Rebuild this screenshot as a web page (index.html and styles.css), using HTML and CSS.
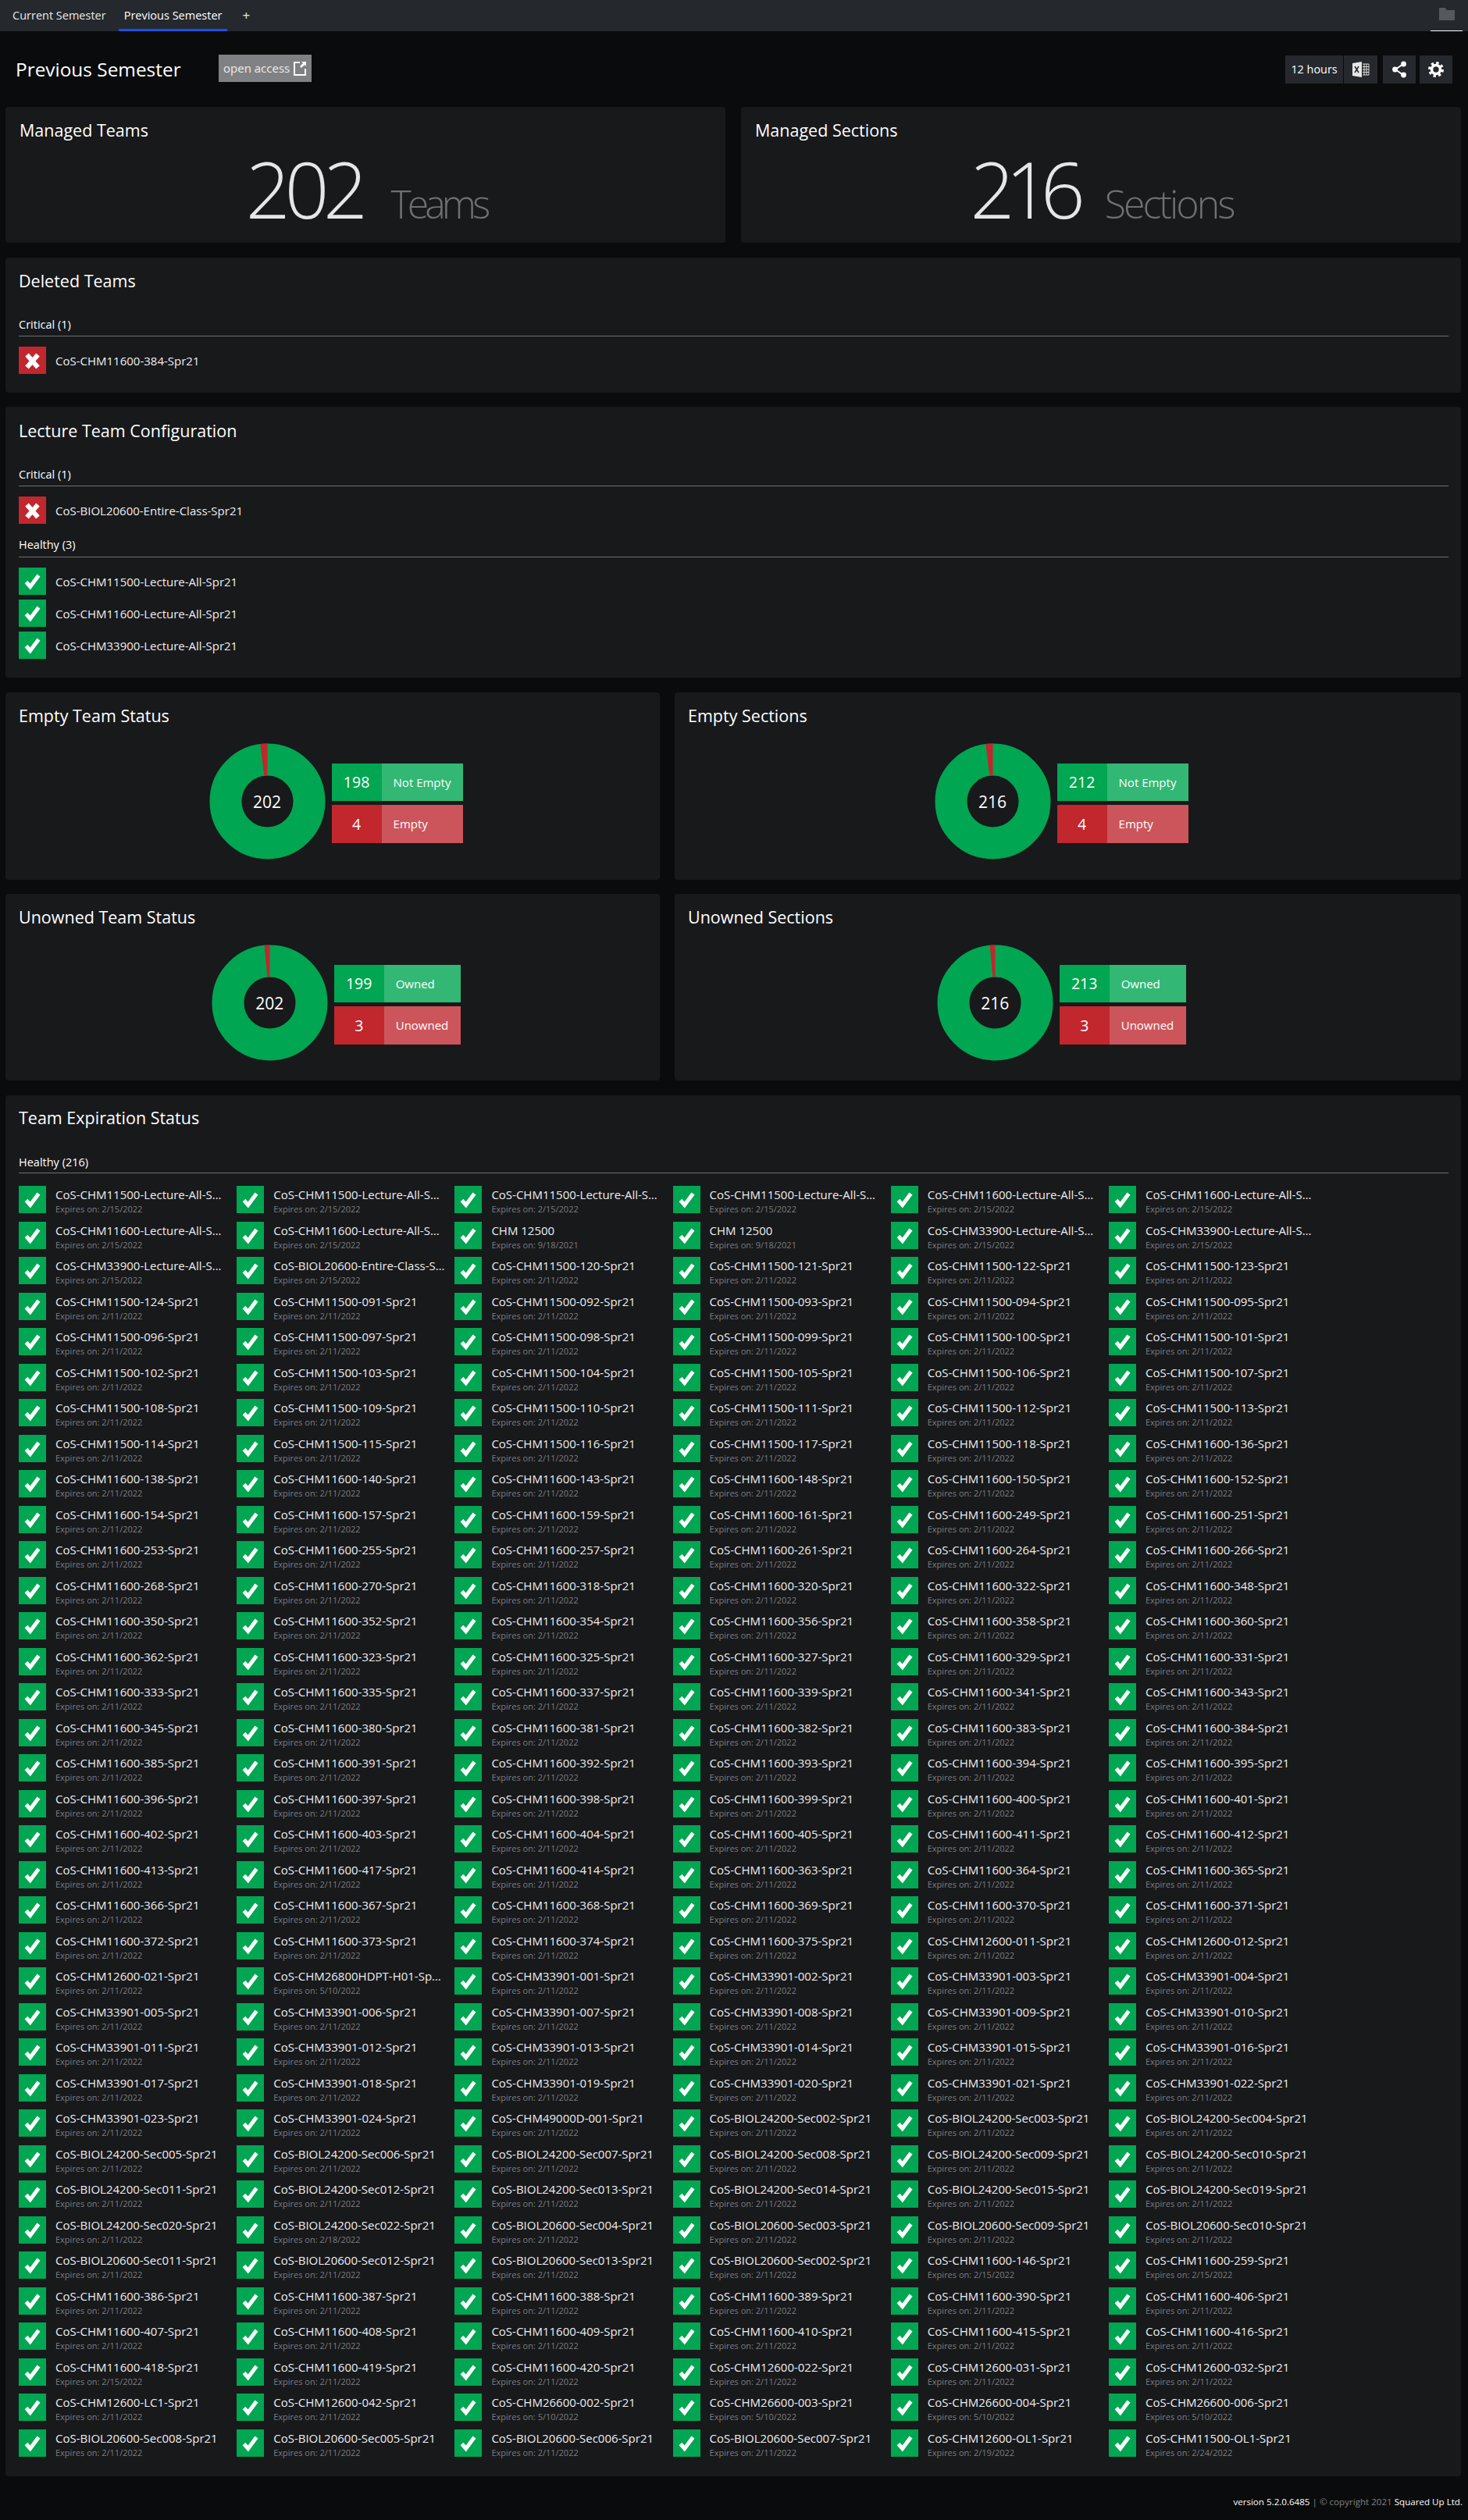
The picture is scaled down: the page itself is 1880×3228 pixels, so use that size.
FILE: index.html
```html
<!DOCTYPE html>
<html lang="en">
<head>
    <title>Previous Semester</title>
    <meta name="viewport" content="width=device-width, initial-scale=1.0">
    <link rel="stylesheet" href="styles.css">
</head>
<body>
    <svg class="sprite" xmlns="http://www.w3.org/2000/svg">
        <symbol id="ok" viewBox="0 0 35 35"><path d="M9.5 18.5 L14.7 24.5 L25.5 10" fill="none" stroke="#fff" stroke-width="5"/></symbol>
        <symbol id="bad" viewBox="0 0 35 35"><path d="M10.5 10.5 L24.5 26.5 M24.5 10.5 L10.5 26.5" fill="none" stroke="#fff" stroke-width="6"/></symbol>
    </svg>

    <nav class="tabs">
        <a class="tab">Current Semester</a>
        <a class="tab active">Previous Semester</a>
        <a class="tab tab-add">+</a>
        <a class="tab-folder">
            <svg width="20" height="16" viewBox="0 0 20 16"><path d="M0 0 H8 L10 3 H20 V16 H0 Z" fill="#55585c"/></svg>
        </a>
    </nav>

    <header class="page-head">
        <h1>Previous Semester</h1>
        <button class="open-access">open access
            <svg width="16" height="19" viewBox="0 0 16 19"><path d="M8 2 H1 V18 H15 V10" fill="none" stroke="#fff" stroke-width="2"/><path d="M10 1 H16 V7 L14 5 L10 9 L8 7 L12 3 Z" fill="#fff"/></svg>
        </button>
        <div class="controls">
            <span class="ctl ctl-time">12 hours</span>
            <span class="ctl ctl-xls">
                <svg width="22" height="20" viewBox="0 0 22 20"><path d="M0 2 L12 0 V20 L0 18 Z" fill="#e6e6e6"/><path d="M3 6 L8 14 M8 6 L3 14" stroke="#25282d" stroke-width="1.5"/><path d="M13 3 H21 V17 H13 M15 3 V17 M18 3 V17 M13 6.5 H21 M13 10 H21 M13 13.5 H21" fill="none" stroke="#d8d8d8" stroke-width="1"/></svg>
            </span>
            <span class="ctl">
                <svg width="20" height="22" viewBox="0 0 20 22"><path d="M15 4 L5 11 L15 18" fill="none" stroke="#fff" stroke-width="2"/><circle cx="15.5" cy="4" r="3.4" fill="#fff"/><circle cx="4.5" cy="11" r="3.4" fill="#fff"/><circle cx="15.5" cy="18" r="3.4" fill="#fff"/></svg>
            </span>
            <span class="ctl">
                <svg width="20" height="20" viewBox="0 0 20 20"><circle cx="10" cy="10" r="5.5" fill="none" stroke="#fff" stroke-width="3.6"/><circle cx="10" cy="10" r="8.3" fill="none" stroke="#fff" stroke-width="3.4" stroke-dasharray="3.3 3.22"/></svg>
            </span>
        </div>
    </header>

    <main class="page">
        <div class="row row-stats">
            <section class="card stat-card">
                <h2>Managed Teams</h2>
                <div class="stat"><span class="stat-num">202</span><span class="stat-unit unit-teams">Teams</span></div>
            </section>
            <section class="card stat-card">
                <h2>Managed Sections</h2>
                <div class="stat"><span class="stat-num num-narrow">216</span><span class="stat-unit">Sections</span></div>
            </section>
        </div>

        <section class="card deleted">
            <h2>Deleted Teams</h2>
            <h3>Critical (1)</h3>
            <div class="simple-item"><svg class="ico ico-bad"><use href="#bad"/></svg>CoS-CHM11600-384-Spr21</div>
        </section>

        <section class="card lecture">
            <h2>Lecture Team Configuration</h2>
            <h3>Critical (1)</h3>
            <div class="simple-item"><svg class="ico ico-bad"><use href="#bad"/></svg>CoS-BIOL20600-Entire-Class-Spr21</div>
            <h3 class="h3-next">Healthy (3)</h3>
            <div class="simple-item"><svg class="ico ico-ok"><use href="#ok"/></svg>CoS-CHM11500-Lecture-All-Spr21</div>
            <div class="simple-item"><svg class="ico ico-ok"><use href="#ok"/></svg>CoS-CHM11600-Lecture-All-Spr21</div>
            <div class="simple-item"><svg class="ico ico-ok"><use href="#ok"/></svg>CoS-CHM33900-Lecture-All-Spr21</div>
        </section>

        <div class="row row-donuts row-empty">
            <section class="card donut-card left">
                <h2>Empty Team Status</h2>
                <div class="donut-row">
                    <div class="donut">
                        <svg width="149" height="149" viewBox="0 0 149 149"><circle cx="74.5" cy="74.5" r="53.5" fill="none" stroke="#00a651" stroke-width="41"/><path d="M74.5 .5 A74 74 0 0 0 65.3 1.07 L70.4 41.75 A33 33 0 0 1 74.5 41.5 Z" fill="#c1272d"/></svg>
                        <span>202</span>
                    </div>
                    <div class="legend">
                        <span class="num ok">198</span><span class="lab ok">Not Empty</span>
                        <span class="num bad">4</span><span class="lab bad">Empty</span>
                    </div>
                </div>
            </section>
            <section class="card donut-card right">
                <h2>Empty Sections</h2>
                <div class="donut-row">
                    <div class="donut">
                        <svg width="149" height="149" viewBox="0 0 149 149"><circle cx="74.5" cy="74.5" r="53.5" fill="none" stroke="#00a651" stroke-width="41"/><path d="M74.5 .5 A74 74 0 0 0 65.3 1.07 L70.4 41.75 A33 33 0 0 1 74.5 41.5 Z" fill="#c1272d"/></svg>
                        <span>216</span>
                    </div>
                    <div class="legend">
                        <span class="num ok">212</span><span class="lab ok">Not Empty</span>
                        <span class="num bad">4</span><span class="lab bad">Empty</span>
                    </div>
                </div>
            </section>
        </div>

        <div class="row row-donuts row-unowned">
            <section class="card donut-card left">
                <h2>Unowned Team Status</h2>
                <div class="donut-row">
                    <div class="donut">
                        <svg width="149" height="149" viewBox="0 0 149 149"><circle cx="74.5" cy="74.5" r="53.5" fill="none" stroke="#00a651" stroke-width="41"/><path d="M74.5 .5 A74 74 0 0 0 67.6 .83 L71.4 41.65 A33 33 0 0 1 74.5 41.5 Z" fill="#c1272d"/></svg>
                        <span>202</span>
                    </div>
                    <div class="legend">
                        <span class="num ok">199</span><span class="lab ok">Owned</span>
                        <span class="num bad">3</span><span class="lab bad">Unowned</span>
                    </div>
                </div>
            </section>
            <section class="card donut-card right">
                <h2>Unowned Sections</h2>
                <div class="donut-row">
                    <div class="donut">
                        <svg width="149" height="149" viewBox="0 0 149 149"><circle cx="74.5" cy="74.5" r="53.5" fill="none" stroke="#00a651" stroke-width="41"/><path d="M74.5 .5 A74 74 0 0 0 67.6 .83 L71.4 41.65 A33 33 0 0 1 74.5 41.5 Z" fill="#c1272d"/></svg>
                        <span>216</span>
                    </div>
                    <div class="legend">
                        <span class="num ok">213</span><span class="lab ok">Owned</span>
                        <span class="num bad">3</span><span class="lab bad">Unowned</span>
                    </div>
                </div>
            </section>
        </div>

        <section class="card expiry">
            <h2>Team Expiration Status</h2>
            <h3>Healthy (216)</h3>
            <div class="expiry-list" id="expiry-list"></div>
        </section>
    </main>

    <footer class="foot">
        <span>version 5.2.0.6485</span> <span class="dim">| © copyright 2021</span> <span>Squared Up Ltd.</span>
    </footer>

    <script src="script.js"></script>
</body>
</html>
```

FILE: styles.css
```css
* {
    box-sizing: border-box;
}
body {
    margin: 0;
    background: #0a0b0c;
    color: #fff;
    font-family: "Open Sans", "Noto Sans", Arial, sans-serif;
    font-size: 15px;
}
.sprite {
    display: none;
}
h1, h2, h3 {
    margin: 0;
    font-weight: 400;
}

/* tabs */
.tabs {
    display: flex;
    height: 40px;
    padding-left: 9px;
    gap: 9px;
    background: #25282d;
}
.tab {
    padding: 0 7px;
    line-height: 40px;
    font-size: 14.5px;
    color: #e8e8e8;
}
.tab.active {
    color: #fff;
    border-bottom: 3px solid #1652e8;
}
.tab-add {
    margin-left: 10px;
    padding: 0;
    font-size: 17px;
}
.tab-folder {
    display: flex;
    justify-content: center;
    width: 41px;
    margin-left: auto;
    margin-right: 7px;
    padding-top: 10px;
    border-bottom: 1px solid #fff;
}

/* page header */
.page-head {
    display: flex;
    align-items: center;
    height: 97px;
    padding: 0 20px;
}
.page-head h1 {
    margin-right: 48px;
    font-size: 24.4px;
}
.open-access {
    display: flex;
    align-items: center;
    justify-content: center;
    gap: 5px;
    width: 119px;
    height: 35px;
    margin-bottom: 3px;
    padding: 0;
    border: 0;
    background: #808184;
    color: #eee;
    font-family: inherit;
    font-size: 15px;
}
.controls {
    display: flex;
    margin-left: auto;
}
.ctl {
    display: flex;
    align-items: center;
    justify-content: center;
    width: 42px;
    height: 36px;
    margin-left: 5px;
    background: #25282d;
    font-size: 14.4px;
}
.ctl-time {
    width: 74px;
}
.ctl-xls {
    width: 43px;
    margin-left: 1px;
    margin-right: 2px;
}

/* cards */
.page {
    width: 1864px;
    margin-left: 7px;
}
.row {
    display: grid;
}
.row-stats {
    grid-template-columns: 922px 922px;
    gap: 20px;
}
.row-donuts {
    grid-template-columns: 838px 1007px;
    gap: 19px;
}
.card {
    padding: 16px 16px 0 17px;
    background: #18191b;
    border-radius: 4px;
}
.card h2 {
    font-size: 21.5px;
    line-height: 28px;
}
.card h3 {
    padding-bottom: 4px;
    margin-top: 32px;
    border-bottom: 1px solid #6f7072;
    font-size: 14.5px;
    line-height: 20px;
}
.card h3.h3-next {
    margin-top: 17px;
    padding-bottom: 5px;
}

/* big numbers */
.stat-card {
    height: 174px;
    padding-left: 18px;
}
.stat {
    display: flex;
    align-items: baseline;
    justify-content: center;
    gap: 37px;
    height: 100px;
    margin-top: 10px;
    line-height: 100px;
}
.stat-num {
    font-size: 100px;
    font-weight: 300;
    letter-spacing: -7.5px;
    color: #e6e6e8;
}
.num-narrow {
    letter-spacing: -12px;
}
.stat-unit {
    font-size: 50px;
    font-weight: 300;
    letter-spacing: -3px;
    color: #6f7072;
}
.unit-teams {
    letter-spacing: -5px;
}

/* status lists */
.deleted {
    height: 173px;
    margin-top: 19px;
}
.lecture {
    height: 347px;
    margin-top: 18px;
}
.lecture h2 {
    padding-top: 1px;
}
.simple-item {
    display: flex;
    align-items: center;
    gap: 12px;
    height: 35px;
    margin-top: 13px;
    color: #eee;
}
.simple-item + .simple-item {
    margin-top: 6px;
}
.ico {
    flex: none;
    width: 35px;
    height: 35px;
}
.ico-ok {
    background: #00a651;
}
.ico-bad {
    background: #c1272d;
}

/* donuts */
.row-empty {
    margin-top: 19px;
}
.row-unowned {
    margin-top: 18px;
}
.donut-card {
    height: 240px;
}
.row-unowned .donut-card {
    height: 239px;
}
.donut-row {
    display: flex;
    align-items: center;
    justify-content: center;
    gap: 8px;
    margin-top: 21px;
}
.donut-card.left .donut-row {
    padding-left: 8px;
}
.donut-card.right .donut-row {
    padding-right: 17px;
}
.donut {
    position: relative;
    width: 149px;
    height: 149px;
}
.donut svg {
    display: block;
}
.donut span {
    position: absolute;
    top: 0;
    left: 0;
    display: flex;
    align-items: center;
    justify-content: center;
    width: 100%;
    height: 100%;
    font-size: 21px;
}
.legend {
    display: grid;
    grid-template-columns: 64px auto;
    grid-auto-rows: 48.5px;
    row-gap: 5px;
    margin-top: 4px;
}
.legend span {
    display: flex;
    align-items: center;
}
.num {
    justify-content: center;
    font-size: 19.5px;
}
.lab {
    padding: 0 16px 0 15px;
    font-size: 15px;
}
.num.ok {
    background: #00a651;
}
.num.bad {
    background: #c1272d;
}
.lab.ok {
    background: #32b874;
}
.lab.bad {
    background: #cc555b;
}

/* expiry list */
.expiry {
    height: 1769px;
    margin-top: 19px;
    padding-top: 15px;
}
.expiry h3 {
    margin-top: 33px;
    padding-bottom: 3px;
}
.expiry-list {
    display: grid;
    grid-template-columns: repeat(6, 279.2px);
    grid-auto-rows: 45.51px;
    margin-top: 16px;
}
.item {
    display: flex;
    gap: 12px;
    min-width: 0;
}
.item-text {
    width: 220px;
    padding-top: 1px;
}
.item-name {
    overflow: hidden;
    white-space: nowrap;
    text-overflow: ellipsis;
    line-height: 20px;
    color: #eee;
}
.item-date {
    line-height: 18px;
    font-size: 11px;
    color: #7c7d80;
}

/* footer */
.foot {
    height: 56px;
    padding: 22px 7px 0 0;
    text-align: right;
    font-size: 11.6px;
    line-height: 22px;
}
.dim {
    color: #808184;
}
```

FILE: script.js
```js
// rows of the expiry tile, "name|date" when the date is not the usual one
const L = "-Lecture-All|2/15/2022";
const list = [
    "CHM11500" + L, "CHM11500" + L, "CHM11500" + L, "CHM11500" + L, "CHM11600" + L, "CHM11600" + L,
    "CHM11600" + L, "CHM11600" + L, "=CHM 12500|9/18/2021", "=CHM 12500|9/18/2021", "CHM33900" + L, "CHM33900" + L,
    "CHM33900" + L, "BIOL20600-Entire-Class|2/15/2022", "CHM11500-120", "CHM11500-121", "CHM11500-122", "CHM11500-123"
];

function add(prefix, ids) {
    ids.split(" ").forEach(id => list.push(prefix + id));
}

add("CHM11500-", "124 091 092 093 094 095 096 097 098 099 100 101 102 103 104 105 106 107 108 109 110 111 112 113 114 115 116 117 118");
add("CHM11600-", "136 138 140 143 148 150 152 154 157 159 161 249 251 253 255 257 261 264 266 268 270 318 320 322 348 350 352 354 356 358 360 362 323 325 327 329 331 333 335 337 339 341 343 345 380 381 382 383 384 385 391 392 393 394 395 396 397 398 399 400 401 402 403 404 405 411 412 413 417 414 363 364 365 366 367 368 369 370 371 372 373 374 375");
add("CHM12600-", "011 012 021");
list.push("CHM26800HDPT-H01|5/10/2022");
add("CHM33901-", "001 002 003 004 005 006 007 008 009 010 011 012 013 014 015 016 017 018 019 020 021 022 023 024");
list.push("CHM49000D-001");
add("BIOL24200-Sec", "002 003 004 005 006 007 008 009 010 011 012 013 014 015 019 020");
list.push("BIOL24200-Sec022|2/18/2022");
add("BIOL20600-Sec", "004 003 009 010 011 012 013 002");
list.push("CHM11600-146|2/15/2022", "CHM11600-259|2/15/2022");
add("CHM11600-", "386 387 388 389 390 406 407 408 409 410 415 416");
list.push("CHM11600-418|2/15/2022");
add("CHM11600-", "419 420");
add("CHM12600-", "022 031 032 LC1 042");
list.push("CHM26600-002|5/10/2022", "CHM26600-003|5/10/2022", "CHM26600-004|5/10/2022", "CHM26600-006|5/10/2022");
add("BIOL20600-Sec", "008 005 006 007");
list.push("CHM12600-OL1|2/19/2022", "CHM11500-OL1|2/24/2022");

const box = document.getElementById("expiry-list");
box.innerHTML = list.map(entry => {
    const [raw, date] = entry.split("|");
    const name = raw[0] === "=" ? raw.slice(1) : `CoS-${raw}-Spr21`;
    return `<div class="item"><svg class="ico ico-ok"><use href="#ok"/></svg><div class="item-text"><div class="item-name">${name}</div><div class="item-date">Expires on: ${date || "2/11/2022"}</div></div></div>`;
}).join("");
```
